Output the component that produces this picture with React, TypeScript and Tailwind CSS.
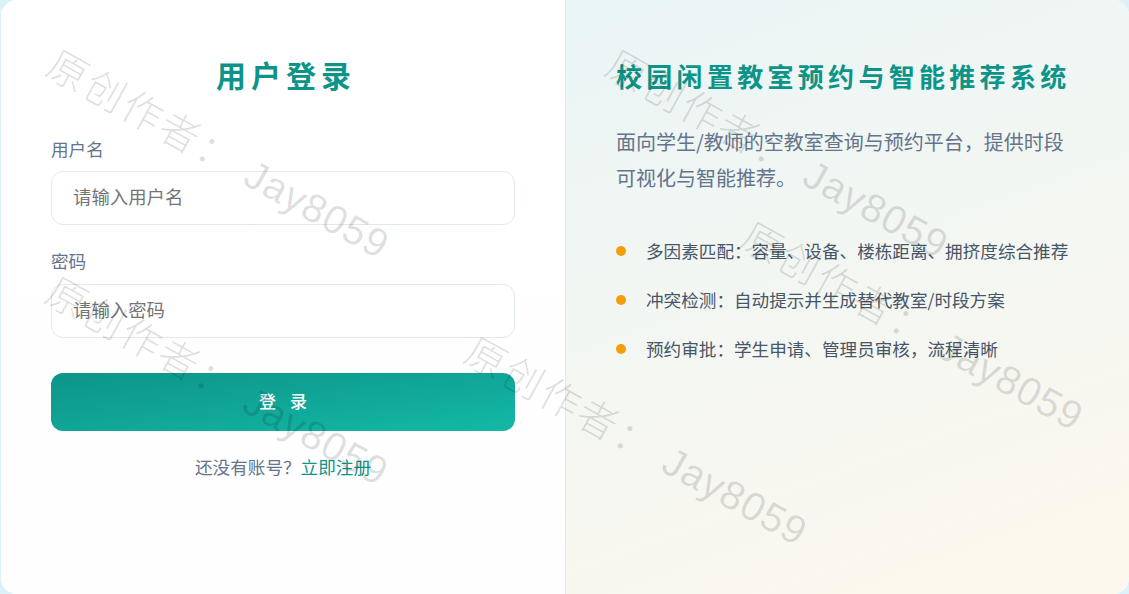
const marks = [
  'left-[59px] top-[44px]',
  'left-[58px] top-[271px]',
  'left-[618px] top-[44px]',
  'left-[753px] top-[216px]',
  'left-[477px] top-[331px]',
]

const features = [
  '多因素匹配：容量、设备、楼栋距离、拥挤度综合推荐',
  '冲突检测：自动提示并生成替代教室/时段方案',
  '预约审批：学生申请、管理员审核，流程清晰',
]

export default function App() {
  return (
    <div className="h-[594px] w-[1129px] overflow-hidden bg-[#dcf1f8] pl-px font-['Noto_Sans_CJK_SC',sans-serif]">
      <div className="relative flex h-[594px] w-[1128px] overflow-hidden rounded-2xl bg-white">
        {/* Login form */}
        <div className="w-[564px] bg-gradient-to-b from-white to-[#fefeff] px-[50px] pt-[53px]">
          <h1 className="pl-[6px] text-center text-[30px] leading-[42px] font-bold tracking-[5px] text-[#0d9488]">用户登录</h1>

          <label className="mt-[41px] block text-[17.6px] leading-[26px] text-[#64748b]">用户名</label>
          <input
            placeholder="请输入用户名"
            className="mt-[9px] block h-[54px] w-[464px] rounded-xl border border-[#e2e8f0] bg-white px-[21px] pb-[5px] text-[18.4px] outline-none placeholder:text-[#757575]"
          />

          <label className="mt-[23px] block text-[17.6px] leading-[26px] text-[#64748b]">密码</label>
          <input
            placeholder="请输入密码"
            className="mt-[10px] block h-[54px] w-[464px] rounded-xl border border-[#e2e8f0] bg-white px-[21px] pb-[5px] text-[18.4px] outline-none placeholder:text-[#757575]"
          />

          <button className="mt-[35px] block h-[58px] w-[464px] rounded-xl bg-gradient-to-br from-[#0d9488] to-[#14b8a6] pb-[2px] pl-[14px] text-[17px] font-medium tracking-[14px] text-white">
            登录
          </button>

          <p className="mt-[23px] text-center text-[17.6px] leading-[26px] text-[#64748b]">
            还没有账号？<a className="text-[#0d9488]">立即注册</a>
          </p>
        </div>

        {/* Intro panel */}
        <div className="w-[564px] border-l border-[#e2e8f0] bg-[linear-gradient(160deg,#eaf5f6,#fdf8ed)] pt-[56px] pl-[50px]">
          <h2 className="text-[26px] leading-[40px] font-bold tracking-[4.3px] whitespace-nowrap text-[#0d9488]">校园闲置教室预约与智能推荐系统</h2>

          <p className="mt-[28px] w-[460px] text-[20px] leading-[36px] text-[#64748b]">
            面向学生/教师的空教室查询与预约平台，提供时段可视化与智能推荐。
          </p>

          <ul className="mt-[42px] flex flex-col gap-[23px]">
            {features.map(f => (
              <li key={f} className="flex items-center gap-[20px] text-[17.6px] leading-[26px] whitespace-nowrap text-[#475569]">
                <span className="h-[10px] w-[10px] rounded-full bg-[#f59e0b]"></span>
                {f}
              </li>
            ))}
          </ul>
        </div>

        {/* Watermark */}
        {marks.map(m => (
          <div
            key={m}
            className={`pointer-events-none absolute ${m} origin-top-left rotate-[29deg] font-['Liberation_Sans','Noto_Sans_CJK_SC',sans-serif] text-[40px] leading-none font-light tracking-[2.5px] whitespace-nowrap text-black/[0.13]`}
          >
            原创作者： <span className="tracking-[1px]">Jay8059</span>
          </div>
        ))}
      </div>
    </div>
  )
}
